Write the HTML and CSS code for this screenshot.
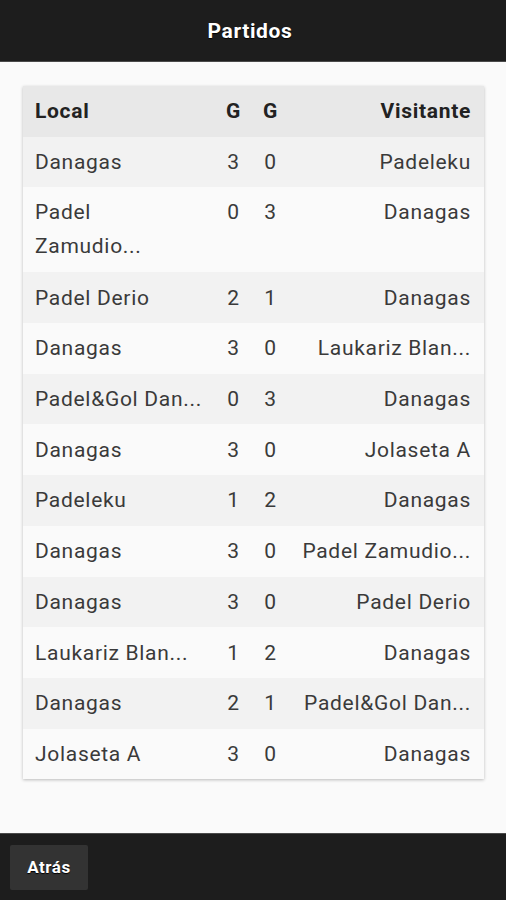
FILE: index.html
```html
<!DOCTYPE html>
<html>
<head>
    <title>Partidos</title>
    <link rel="stylesheet" href="styles.css">
</head>
<body>
    <div class="app">
        <div class="top-bar">Partidos</div>

        <div class="content">
            <table class="matches">
                <colgroup>
                    <col class="col-local">
                    <col class="col-goal">
                    <col class="col-goal">
                    <col class="col-visit">
                </colgroup>
                <thead>
                    <tr>
                        <th class="local">Local</th>
                        <th class="goal">G</th>
                        <th class="goal">G</th>
                        <th class="visit">Visitante</th>
                    </tr>
                </thead>
                <tbody>
                    <tr><td class="local">Danagas</td><td class="goal">3</td><td class="goal">0</td><td class="visit">Padeleku</td></tr>
                    <tr><td class="local">Padel<br>Zamudio...</td><td class="goal">0</td><td class="goal">3</td><td class="visit">Danagas</td></tr>
                    <tr><td class="local">Padel Derio</td><td class="goal">2</td><td class="goal">1</td><td class="visit">Danagas</td></tr>
                    <tr><td class="local">Danagas</td><td class="goal">3</td><td class="goal">0</td><td class="visit">Laukariz Blan...</td></tr>
                    <tr><td class="local">Padel&amp;Gol Dan...</td><td class="goal">0</td><td class="goal">3</td><td class="visit">Danagas</td></tr>
                    <tr><td class="local">Danagas</td><td class="goal">3</td><td class="goal">0</td><td class="visit">Jolaseta A</td></tr>
                    <tr><td class="local">Padeleku</td><td class="goal">1</td><td class="goal">2</td><td class="visit">Danagas</td></tr>
                    <tr><td class="local">Danagas</td><td class="goal">3</td><td class="goal">0</td><td class="visit">Padel Zamudio...</td></tr>
                    <tr><td class="local">Danagas</td><td class="goal">3</td><td class="goal">0</td><td class="visit">Padel Derio</td></tr>
                    <tr><td class="local">Laukariz Blan...</td><td class="goal">1</td><td class="goal">2</td><td class="visit">Danagas</td></tr>
                    <tr><td class="local">Danagas</td><td class="goal">2</td><td class="goal">1</td><td class="visit">Padel&amp;Gol Dan...</td></tr>
                    <tr><td class="local">Jolaseta A</td><td class="goal">3</td><td class="goal">0</td><td class="visit">Danagas</td></tr>
                </tbody>
            </table>
        </div>

        <div class="bottom-bar">
            <button class="back-btn">Atrás</button>
        </div>
    </div>
</body>
</html>
```

FILE: styles.css
```css
html, body {
    margin: 0;
    padding: 0;
    height: 100%;
}
body {
    font-family: Roboto, "Noto Sans", Arial, sans-serif;
    background: #fafafa;
    color: #3a3a3a;
}
.app {
    display: flex;
    flex-direction: column;
    height: 900px;
}
.top-bar {
    height: 61px;
    background: #1d1d1d;
    border-bottom: 1px solid #4a4a4a;
    color: #fff;
    font-weight: bold;
    font-size: 21px;
    letter-spacing: 0.6px;
    display: flex;
    align-items: center;
    justify-content: center;
    padding-right: 6px;
    text-shadow: 0 1px 1px #000;
}
.content {
    flex: 1;
    padding: 24px 22px 0 23px;
}
.matches {
    width: 461px;
    border-collapse: collapse;
    table-layout: fixed;
    box-shadow: 0 1px 3px rgba(0, 0, 0, 0.25);
    font-size: 21px;
    letter-spacing: 0.7px;
}
.col-local {
    width: 192px;
}
.col-goal {
    width: 37px;
}
th, td {
    padding: 0;
    height: 50.7px;
    vertical-align: middle;
}
td {
    line-height: 34px;
}
td.local, th.local {
    padding-left: 12px;
    text-align: left;
}
td.goal, th.goal {
    text-align: center;
}
td.visit, th.visit {
    padding-right: 13px;
    text-align: right;
    white-space: nowrap;
}
thead tr {
    background: #e8e8e8;
    color: #222;
}
th {
    font-weight: bold;
}
tbody tr:nth-child(odd) {
    background: #f2f2f2;
}
tbody tr:nth-child(even) {
    background: #fafafa;
}
tbody tr:nth-child(2) td {
    padding-top: 8px;
    padding-bottom: 9px;
    vertical-align: top;
}
.bottom-bar {
    height: 67px;
    background: #1d1d1d;
    border-top: 1px solid #4a4a4a;
    display: flex;
    align-items: center;
    padding-left: 10px;
    box-sizing: border-box;
}
.back-btn {
    background: #333;
    color: #fff;
    border: none;
    border-radius: 2px;
    font-family: Roboto, Arial, sans-serif;
    font-weight: bold;
    font-size: 17px;
    letter-spacing: 0.5px;
    width: 78px;
    height: 45px;
    padding: 0;
    cursor: pointer;
    text-shadow: 0 1px 1px #000;
}
```
